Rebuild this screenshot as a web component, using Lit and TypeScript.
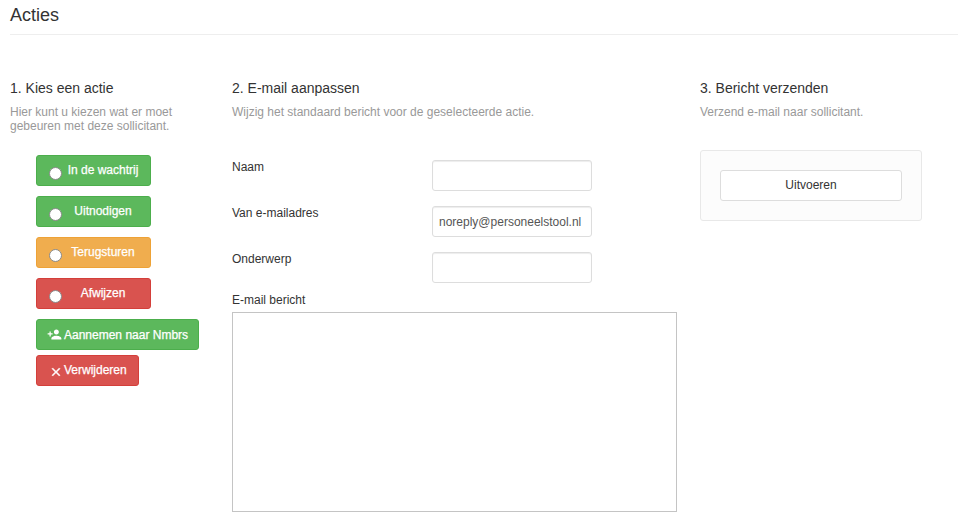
import { LitElement, html, css, svg } from "lit";
import { customElement } from "lit/decorators.js";

const personAdd = svg`<svg class="ico" width="15" height="15" viewBox="0 0 24 24" fill="#fff"><path d="M15 12c2.21 0 4-1.79 4-4s-1.79-4-4-4-4 1.79-4 4 1.79 4 4 4zm-9-2V7H4v3H1v2h3v3h2v-3h3v-2H6zm9 4c-2.67 0-8 1.34-8 4v2h16v-2c0-2.66-5.33-4-8-4z"/></svg>`;
const closeIco = svg`<svg class="ico" width="14" height="14" viewBox="0 0 24 24" fill="#fff"><path d="M19 6.41 17.59 5 12 10.59 6.41 5 5 6.41 10.59 12 5 17.59 6.41 19 12 13.41 17.59 19 19 17.59 13.41 12z" stroke="#fff" stroke-width="0.8"/></svg>`;

@customElement("app-root")
export class AppRoot extends LitElement {
  static styles = css`
    :host { display: block; width: 975px; height: 525px; overflow: hidden; background: #fff; font-family: "Liberation Sans", Arial, sans-serif; font-size: 12px; color: #333; box-sizing: border-box; padding: 0 17px 0 10px; }
    * { box-sizing: border-box; }
    h1 { margin: 0; font-size: 18px; font-weight: 400; line-height: 20px; padding-top: 5px; height: 34px; color: #333; }
    .rule { height: 1px; background: #eee; }
    .cols { display: flex; padding-top: 45px; }
    .c1 { width: 222px; flex: none; }
    .c2 { width: 468px; flex: none; }
    .c3 { width: 222px; flex: none; }
    h2 { margin: 0; font-size: 14px; font-weight: 400; line-height: 16px; color: #333; }
    .help { margin: 9px 0 0; line-height: 14px; color: #999; }
    .help.two { width: 190px; }
    .actions { display: flex; flex-direction: column; align-items: flex-start; padding: 22px 0 0 26px; }
    .btn { display: flex; align-items: center; height: 31px; border: 1px solid; border-radius: 3px; color: #fff; font: 400 12px "Liberation Sans", Arial, sans-serif; -webkit-text-stroke: 0.25px #fff; white-space: nowrap; padding: 0; }
    .green { background: #5cb85c; border-color: #4cae4c; }
    .orange { background: #f0ad4e; border-color: #eea236; }
    .red { background: #d9534f; border-color: #d43f3a; }
    .radio { width: 115px; margin-bottom: 10px; padding: 0 6px 0 12px; }
    .radio input { appearance: none; width: 13px; height: 13px; margin: 5px 0 0; flex: none; background: #fff; border: 1px solid #8a8a8a; border-radius: 50%; }
    .radio span { flex: 1; text-align: center; margin-top: -2px; }
    .wide { padding: 0 10px 0 10px; margin-bottom: 5px; }
    .wide .ico, .del .ico { flex: none; }
    .wide span { margin-left: 2px; margin-top: 0; }
    .del { padding: 0 11px 0 12px; }
    .del span { margin-left: 1px; margin-top: -1px; }
    .del .ico { margin-top: 2px; }
    .form { display: flex; flex-direction: column; padding-top: 41px; }
    .row { display: flex; align-items: flex-start; height: 46px; }
    .row label { width: 200px; flex: none; line-height: 14px; }
    .row input { width: 160px; height: 31px; margin-top: 0; }
    input.text { border: 1px solid #ddd; border-radius: 3px; padding: 0 6px; font: 12px "Liberation Sans", Arial, sans-serif; color: #555; background: #fff; box-shadow: inset 0 1px 1px rgba(0,0,0,.075); outline: none; }
    .msg { display: block; margin-top: -5px; line-height: 14px; }
    textarea { display: block; width: 445px; height: 200px; margin: 5px 0 0; border: 1px solid #c4c4c4; background: #fff; resize: none; outline: none; padding: 2px; }
    .panel { margin-top: 31px; width: 222px; height: 71px; padding: 19px; background: #fcfcfc; border: 1px solid #e8e8e8; border-radius: 3px; }
    .run { display: block; width: 182px; height: 31px; background: #fff; border: 1px solid #ddd; border-radius: 3px; color: #333; font: 12px "Liberation Sans", Arial, sans-serif; padding: 0 0 1px; }
  `;

  render() {
    const radios: [string, string][] = [
      ["green", "In de wachtrij"],
      ["green", "Uitnodigen"],
      ["orange", "Terugsturen"],
      ["red", "Afwijzen"],
    ];
    return html`
      <h1>Acties</h1>
      <div class="rule"></div>
      <div class="cols">
        <section class="c1">
          <h2>1. Kies een actie</h2>
          <p class="help two">Hier kunt u kiezen wat er moet gebeuren met deze sollicitant.</p>
          <div class="actions">
            ${radios.map(([c, t]) => html`<div class="btn radio ${c}"><input type="radio" name="a" /><span>${t}</span></div>`)}
            <button class="btn green wide">${personAdd}<span>Aannemen naar Nmbrs</span></button>
            <button class="btn red del">${closeIco}<span>Verwijderen</span></button>
          </div>
        </section>
        <section class="c2">
          <h2>2. E-mail aanpassen</h2>
          <p class="help">Wijzig het standaard bericht voor de geselecteerde actie.</p>
          <div class="form">
            <div class="row"><label>Naam</label><input class="text" /></div>
            <div class="row"><label>Van e-mailadres</label><input class="text" .value=${"noreply@personeelstool.nl"} /></div>
            <div class="row"><label>Onderwerp</label><input class="text" /></div>
            <label class="msg">E-mail bericht</label>
            <textarea></textarea>
          </div>
        </section>
        <section class="c3">
          <h2>3. Bericht verzenden</h2>
          <p class="help">Verzend e-mail naar sollicitant.</p>
          <div class="panel"><button class="run">Uitvoeren</button></div>
        </section>
      </div>
    `;
  }
}
